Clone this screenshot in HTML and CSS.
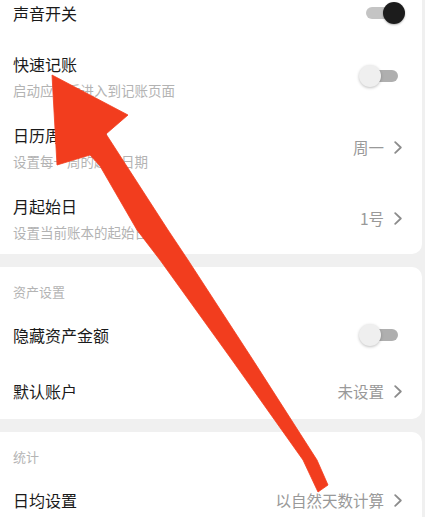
FILE: index.html
```html
<!DOCTYPE html>
<html lang="zh-CN">
<head>
<meta charset="utf-8">
<title>设置</title>
<link rel="stylesheet" href="styles.css">
</head>
<body>
<main class="page">
  <section class="card">
    <div class="row">
      <span class="title">声音开关</span>
      <span class="switch switch--on"><span class="thumb"></span></span>
    </div>
    <div class="row row--sub">
      <div class="text">
        <div class="title">快速记账</div>
        <div class="sub">启动应用后进入到记账页面</div>
      </div>
      <span class="switch"><span class="thumb"></span></span>
    </div>
    <div class="row row--sub">
      <div class="text">
        <div class="title">日历周起始日</div>
        <div class="sub">设置每一周的起始日期</div>
      </div>
      <span class="value">周一<svg class="chev" viewBox="0 0 8 13" width="8" height="13"><polyline points="1.2,1.2 6.8,6.5 1.2,11.8"/></svg></span>
    </div>
    <div class="row row--sub">
      <div class="text">
        <div class="title">月起始日</div>
        <div class="sub">设置当前账本的起始日期</div>
      </div>
      <span class="value">1号<svg class="chev" viewBox="0 0 8 13" width="8" height="13"><polyline points="1.2,1.2 6.8,6.5 1.2,11.8"/></svg></span>
    </div>
  </section>

  <section class="card">
    <div class="card-head">资产设置</div>
    <div class="row">
      <span class="title">隐藏资产金额</span>
      <span class="switch"><span class="thumb"></span></span>
    </div>
    <div class="row">
      <span class="title">默认账户</span>
      <span class="value">未设置<svg class="chev" viewBox="0 0 8 13" width="8" height="13"><polyline points="1.2,1.2 6.8,6.5 1.2,11.8"/></svg></span>
    </div>
  </section>

  <section class="card card--last">
    <div class="card-head">统计</div>
    <div class="row">
      <span class="title">日均设置</span>
      <span class="value">以自然天数计算<svg class="chev" viewBox="0 0 8 13" width="8" height="13"><polyline points="1.2,1.2 6.8,6.5 1.2,11.8"/></svg></span>
    </div>
  </section>
</main>

<svg class="arrow" viewBox="0 0 425 517" width="425" height="517" aria-hidden="true">
  <polygon points="52,75 128,115 106,134 168,230 188,260 253,360 317,460 328,485 318,492 303,460 232,360 160,260 137,230 100,166 90,155 57,165"/>
</svg>
</body>
</html>
```

FILE: styles.css
```css
html, body {
  margin: 0;
  padding: 0;
  height: 517px;
  overflow: hidden;
  background: #f0f0f0;
}

body {
  font-family: "Noto Sans CJK SC", "Noto Sans", sans-serif;
  color: #1e1e1e;
}

.page {
  display: flex;
  flex-direction: column;
  gap: 13px;
  margin-top: -15px;
}

.card {
  background: #ffffff;
  border-radius: 10px;
  margin: 0 3px 0 -10px;
  padding: 0 17px 0 23px;
}

.card--last {
  padding-bottom: 30px;
}

.card-head {
  font-size: 13px;
  line-height: 18px;
  color: #b4b4b4;
  padding: 16px 0 6px;
}

.row {
  display: flex;
  align-items: center;
  justify-content: space-between;
  min-height: 56px;
}

.row--sub {
  min-height: 0;
  padding: 12px 0 13px;
}

.title {
  font-size: 16px;
  line-height: 22px;
  color: #1a1a1a;
}

.sub {
  font-size: 13.5px;
  line-height: 18px;
  margin-top: 6px;
  color: #b3b3b3;
}

.value {
  display: flex;
  align-items: center;
  gap: 10px;
  font-size: 15.5px;
  line-height: 22px;
  color: #999999;
}

.chev {
  margin-right: 3px;
  fill: none;
  stroke: #8c8c8c;
  stroke-width: 1.8;
  stroke-linecap: round;
  stroke-linejoin: round;
}

.switch {
  position: relative;
  display: flex;
  align-items: center;
  justify-content: flex-start;
  width: 46px;
  height: 22px;
}

.switch::before {
  content: "";
  position: absolute;
  left: 7px;
  right: 7px;
  top: 5px;
  height: 12px;
  border-radius: 6px;
  background: #afafaf;
}

.thumb {
  position: relative;
  width: 22px;
  height: 22px;
  border-radius: 50%;
  background: #efefef;
  box-shadow: 0 1px 3px rgba(0, 0, 0, 0.25);
}

.switch--on {
  justify-content: flex-end;
}

.switch--on::before {
  background: #c4c4c4;
}

.switch--on .thumb {
  background: #1c1c1c;
  box-shadow: 0 1px 2px rgba(0, 0, 0, 0.3);
}

.arrow {
  position: absolute;
  top: 0;
  left: 0;
  pointer-events: none;
}

.arrow polygon {
  fill: #f23d1e;
  stroke: #f23d1e;
  stroke-width: 0.8;
  stroke-linejoin: round;
}
```
